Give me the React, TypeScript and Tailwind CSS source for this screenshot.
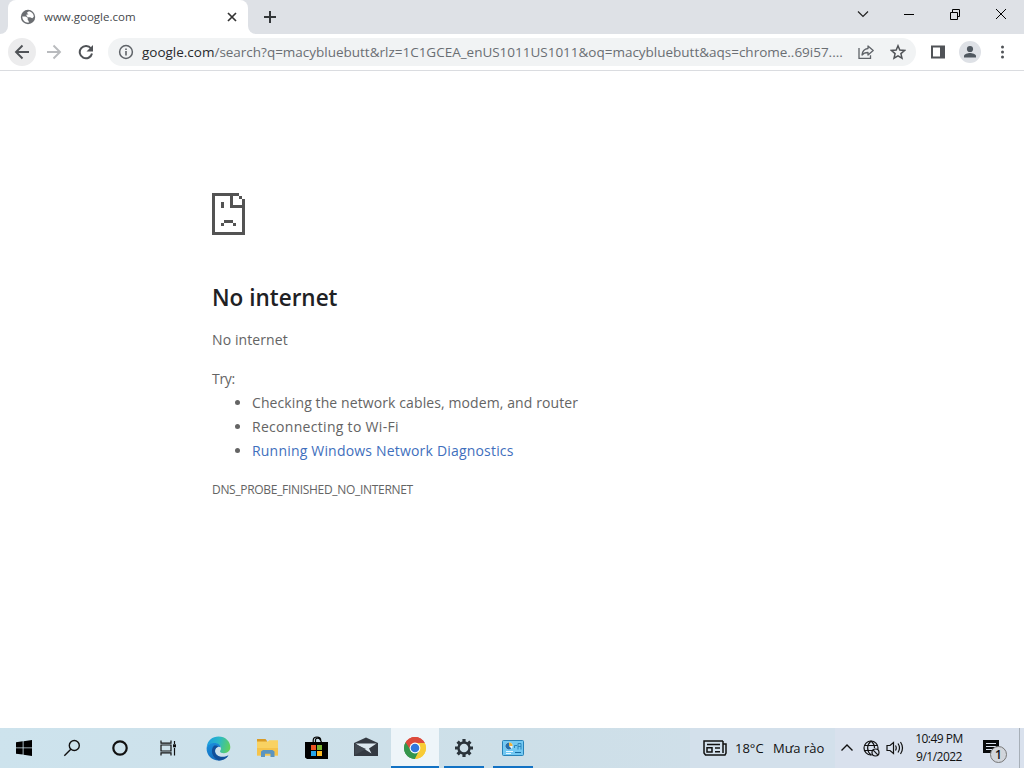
import type { ReactNode } from "react";

const suggestions = [
    { text: "Checking the network cables, modem, and router", className: "tracking-[0.1px]" },
    { text: "Reconnecting to Wi-Fi", className: "tracking-[0.3px]" },
    { text: "Running Windows Network Diagnostics", className: "tracking-[0.19px] text-[#3f6fbd]", link: true },
];

function TabStrip() {
    return (
        <div className="h-[34px] flex bg-[#dee1e6]">
            <div className="w-2 bg-white">
                <div className="h-full bg-[#dee1e6] rounded-br-lg" />
            </div>
            <div className="w-[240px] h-full bg-white rounded-t-lg flex items-center pl-3 pr-[10px]">
                <svg width="16" height="16" viewBox="0 0 16 16">
                    <circle cx="8" cy="8" r="7.2" fill="#6b6e72" />
                    <path
                        d="M2.300 7.500h3.200l2.200 1.200v2.200l1 1v1.800C5 13.800 2.300 11 2.300 7.500ZM6.800 3.800 9 2.300C12 2.800 13.700 5 13.800 7.800L12.300 9.200 10 8.200H7.800L6.500 7V5.500h2Z"
                        fill="#fff"
                    />
                </svg>
                <span className="ml-2 text-[11.5px] leading-4 text-[#45484c] flex-1">www.google.com</span>
                <svg width="12" height="12" viewBox="0 0 12 12">
                    <path d="m2 2 8 8m0-8-8 8" stroke="#333" strokeWidth="1.7" />
                </svg>
            </div>
            <div className="flex-1 bg-white">
                <div className="h-full bg-[#dee1e6] rounded-bl-lg flex items-center pl-[15px] pr-[17px]">
                    <svg width="14" height="14" viewBox="0 0 14 14">
                        <path d="M7 1v12M1 7h12" stroke="#333639" strokeWidth="2" />
                    </svg>
                    <div className="ml-auto flex items-center gap-[34px] pb-[6px]">
                        <svg width="12" height="12" viewBox="0 0 12 12" fill="none" stroke="#222" strokeWidth="1.2">
                            <path d="m1 3.500 5 5 5-5" />
                        </svg>
                        <svg width="12" height="12" viewBox="0 0 12 12" shapeRendering="crispEdges">
                            <path d="M1 6h10v1H1z" fill="#000" />
                        </svg>
                        <svg width="12" height="12" viewBox="0 0 12 12" fill="none" stroke="#000">
                            <path d="M1.500 4.500h7v7h-7zM3.500 4.500v-3h7v7h-2" />
                        </svg>
                        <svg width="12" height="12" viewBox="0 0 12 12" fill="none" stroke="#000">
                            <path d="m1 1 10 10M11 1 1 11" />
                        </svg>
                    </div>
                </div>
            </div>
        </div>
    );
}

function Toolbar() {
    return (
        <div className="h-[37px] flex items-center pl-2 bg-white border-b border-[#dadce0]">
            <div className="size-7 rounded-full bg-[#ececed] flex items-center justify-center">
                <svg width="16" height="16" viewBox="0 0 16 16" fill="none" stroke="#505357" strokeWidth="1.9">
                    <path d="M15 8H2.500M8.500 1.500 2 8l6.500 6.500" />
                </svg>
            </div>
            <svg className="ml-[10px]" width="16" height="16" viewBox="0 0 16 16" fill="none" stroke="#b9bbbe" strokeWidth="1.900">
                <path d="M1 8h12.500M7.500 1.500 14 8l-6.500 6.500" />
            </svg>
            <svg className="ml-4" width="16" height="16" viewBox="0 0 16 16" fill="none" stroke="#505357" strokeWidth="2">
                <path d="M13 4.500A6.200 6.200 0 1 0 14 9.500" />
                <path d="M15 1v6.500H8.500Z" fill="#505357" stroke="none" />
            </svg>
            <div className="ml-[14px] w-[808px] h-7 rounded-full bg-[#f1f3f4] flex items-center pl-[10px] pr-[10px]">
                <svg width="16" height="16" viewBox="0 0 16 16" fill="none" stroke="#5f6368" strokeWidth="1.500">
                    <circle cx="8" cy="8" r="6.400" />
                    <path d="M8 7v4.500M8 4.400v1.600" strokeWidth="1.600" />
                </svg>
                <span className="ml-2 w-[703px] text-[13.5px] leading-5 tracking-[-0.01px] whitespace-nowrap text-[#6a6e73]">
                    <span className="text-[#27292c]">google.com</span>
                    /search?q=macybluebutt&amp;rlz=1C1GCEA_enUS1011US1011&amp;oq=macybluebutt&amp;aqs=chrome..69i57....
                </span>
                <svg className="ml-[13px] shrink-0" width="16" height="16" viewBox="0 0 16 16" fill="none" stroke="#5f6368" strokeWidth="1.300">
                    <path d="M1 4v10.300h11.500v-3" />
                    <path d="M10 2 15.200 6.500 10 11V8.500C7.500 8.500 5.500 9 4 11 4.300 7.500 6 5 10 4.500Z" strokeLinejoin="round" />
                </svg>
                <svg className="ml-4 shrink-0" width="16" height="16" viewBox="0 0 16 16" fill="none" stroke="#505357" strokeWidth="1.500">
                    <path d="m8 1.800 1.800 4.300 4.700.4-3.600 3.100 1.100 4.600L8 11.800l-4 2.400 1.100-4.600L1.500 6.500l4.700-.4Z" />
                </svg>
            </div>
            <svg className="ml-[14px]" width="16" height="16" viewBox="0 0 16 16">
                <path d="M1 1.500h14v13H1ZM3 3.500v9h7v-9Z" fill="#505357" fillRule="evenodd" />
            </svg>
            <svg className="ml-[13px]" width="22" height="22" viewBox="0 0 22 22">
                <circle cx="11" cy="11" r="11" fill="#dee1e6" />
                <circle cx="11" cy="8" r="3.100" fill="#505860" />
                <path d="M5 16.500V15c0-2 4-3 6-3s6 1 6 3v1.500Z" fill="#505860" />
            </svg>
            <svg className="ml-[19px]" width="5" height="16" viewBox="0 0 5 16" fill="#505357">
                <circle cx="2.500" cy="3" r="1.500" />
                <circle cx="2.500" cy="8" r="1.500" />
                <circle cx="2.500" cy="13" r="1.500" />
            </svg>
        </div>
    );
}

function SadPage() {
    return (
        <svg width="33" height="42" viewBox="0 0 11 14" fill="#535353" shapeRendering="crispEdges">
            <path d="M0 0h9v1H1v12h9V5H6V1h1v3h3V2h1v12H0Z" />
            <path d="M9 1h1v1H9zM3 3h1v2H3zM4 9h3v1H4zM3 10h1v1H3zM7 10h1v1H7z" />
        </svg>
    );
}

function ErrorPage() {
    return (
        <main className="flex-1 pl-[212px] pt-[122px] bg-white text-[#646464]">
            <SadPage />
            <h1 className="mt-[47px] text-[22.5px] leading-8 font-semibold text-[#202124]">No internet</h1>
            <p className="mt-[14px] text-[14px] leading-6 tracking-[0.1px]">No internet</p>
            <p className="mt-[15px] text-[14px] leading-6 tracking-[-0.3px]">Try:</p>
            <ul className="list-disc pl-10 text-[14px] leading-6">
                {suggestions.map((s) => (
                    <li key={s.text}>
                        {s.link ? (
                            <a href="#" className={s.className}>
                                {s.text}
                            </a>
                        ) : (
                            <span className={s.className}>{s.text}</span>
                        )}
                    </li>
                ))}
            </ul>
            <p className="mt-4 text-[12px] leading-[22px] tracking-[-0.31px]">DNS_PROBE_FINISHED_NO_INTERNET</p>
        </main>
    );
}

function TaskButton({ children, open, active }: { children: ReactNode; open?: boolean; active?: boolean }) {
    return (
        <div className={`w-[49px] h-full flex flex-col items-center ${active ? "pl-px bg-[#eef5f9] bg-clip-content" : ""}`}>
            <div className="flex-1 flex items-center pt-[2px]">{children}</div>
            <div className={`h-[2px] ${active ? "w-full" : "w-10"} ${open ? "bg-[#1272c4]" : ""}`} />
        </div>
    );
}

function SystemButtons() {
    return (
        <>
            <div className="w-12 flex justify-center">
                <svg width="16" height="16" viewBox="0 0 16 16" fill="#000">
                    <path d="M0 2.200 6.700 1.300v6.200H0ZM7.500 1.200 16 0v7.500H7.500ZM0 8.300h6.700v6.300L0 13.700ZM7.500 8.300H16V16l-8.500-1.300Z" />
                </svg>
            </div>
            <div className="w-12 flex justify-center">
                <svg width="18" height="18" viewBox="0 0 18 18" fill="none" stroke="#111" strokeWidth="1.400">
                    <circle cx="11.300" cy="6.500" r="5" />
                    <path d="m7.800 10.200-6.500 6.500" />
                </svg>
            </div>
            <div className="w-12 flex justify-center">
                <svg width="18" height="18" viewBox="0 0 18 18" fill="none" stroke="#111" strokeWidth="2.200">
                    <circle cx="9" cy="9" r="6.700" />
                </svg>
            </div>
            <div className="w-12 flex justify-center">
                <svg width="17" height="16" viewBox="0 0 17 16" fill="none" stroke="#111" strokeWidth="1.200">
                    <path d="M1 .5v2.700h10V.5M1 5h10v6H1zM1 15.500v-2.700h10v2.700M14.500 1v3M14.500 8v7.500" />
                    <path d="M13 4.300h3v3h-3z" fill="#111" stroke="none" />
                </svg>
            </div>
        </>
    );
}

function Apps() {
    return (
        <>
            <TaskButton>
                <svg width="25" height="25" viewBox="0 0 25 25">
                    <defs>
                        <linearGradient id="edgeTop" x1="0" x2="1" y1="0.300" y2="0.500">
                            <stop offset="0" stopColor="#1b9de2" />
                            <stop offset="0.500" stopColor="#2cb9c5" />
                            <stop offset="1" stopColor="#5fd05e" />
                        </linearGradient>
                        <linearGradient id="edgeSide" x1="0" x2="0.600" y1="0" y2="1">
                            <stop offset="0" stopColor="#1a91de" />
                            <stop offset="1" stopColor="#1468b8" />
                        </linearGradient>
                    </defs>
                    <path d="M.7 11C1.500 4.500 6.500.5 12.500.5c7 0 11.800 5 11.800 10.500 0 4-3 6.200-6.300 6.200-2.500 0-4-.9-4-2 0-.8 1-1.100 1-3 0-2.200-2.200-4.700-6-4.700C4.500 7.500 1.500 9.500.7 11Z" fill="url(#edgeTop)" />
                    <path d="M.6 12C1 9 4.500 7 8.500 7c3.500 0 6 2 6.300 4.500C13 10 9 10.700 9 15c0 4 4 6.700 8.500 6.200 2.300-.3 4-1.300 5-2-2 3.300-5.800 5.300-10 5.300C6 24.500.3 19.500.6 12Z" fill="url(#edgeSide)" />
                    <path d="M8 9.700c-3.800 3.800-2.500 12 4.800 14.700 4 .1 7.700-2 9.700-5.200-5.500 3.300-13.500 1.300-13.500-4.200 0-2.600 2-4 3.500-4.300C11.200 9.700 9.500 9 8 9.700Z" fill="#12509a" />
                </svg>
            </TaskButton>
            <TaskButton>
                <svg width="23" height="20" viewBox="0 0 23 20">
                    <path d="M1 1h8.500l1.500 2v13H1Z" fill="#d99b25" />
                    <path d="M1 3.500h11l1.300-1.300H22v15.300H1Z" fill="#f9d262" />
                    <path d="M1 10h21v7.500H1Z" fill="#f5c34b" />
                    <path d="M5 19v-5.500L7 12h9.500l2 1.500V19h-4v-3.200H9V19Z" fill="#5b94bf" />
                </svg>
            </TaskButton>
            <TaskButton>
                <svg width="24" height="24" viewBox="0 0 24 24">
                    <path d="M8.200 7V4.500C8.200 2 9.700 1 12 1s3.800 1 3.800 3.500V7M10.500 7V3.700C11 2 14 1.500 15 3.500L17 7" fill="none" stroke="#000" strokeWidth="1.200" />
                    <path d="M0 6h23v17H2L0 21.500Z" fill="#000" />
                    <path d="M6 9h5v5H6z" fill="#ee5524" />
                    <path d="M12 9h5v5h-5z" fill="#7ab532" />
                    <path d="M6 15h5v5H6z" fill="#25a4e8" />
                    <path d="M12 15h5v5h-5z" fill="#fcb91f" />
                </svg>
            </TaskButton>
            <TaskButton>
                <svg className="mb-[3px]" width="24" height="20" viewBox="0 0 24 20">
                    <path d="M0 6 12 .5 24 6v13H0Z" fill="#343a42" />
                    <path d="M1.500 6.500 22.500 6.500 15 11.500 17.500 16.500Z" fill="#dce8ef" />
                    <path d="M1 7 12 12l-11 6Z" fill="#414850" />
                </svg>
            </TaskButton>
            <TaskButton open active>
                <svg width="22" height="22" viewBox="0 0 22 22">
                    <path d="M11 11 1.500 5.500A11 11 0 0 1 20.500 5.500Z" fill="#dc4a3b" />
                    <path d="M11 11 20.500 5.500A11 11 0 0 1 11 22Z" fill="#f8cb35" />
                    <path d="M11 11V22A11 11 0 0 1 1.500 5.500Z" fill="#35964c" />
                    <path d="M11 6h9.800l-.3-.5A11 11 0 0 0 1.500 5.500L6.700 13.500Z" fill="#dc4a3b" />
                    <path d="m6.700 13.500 4.300 2.500 4.300-2.500L11 22A11 11 0 0 1 1.500 5.500Z" fill="#35964c" />
                    <path d="M11 6h9.800A11 11 0 0 1 11 22l4.300-8.500Z" fill="#f8cb35" />
                    <circle cx="11" cy="11" r="5.400" fill="#fff" />
                    <circle cx="11" cy="11" r="4.300" fill="#3277dc" />
                </svg>
            </TaskButton>
            <TaskButton open>
                <svg width="18" height="18" viewBox="0 0 18 18" fill="none" stroke="#2b343b">
                    <circle cx="9" cy="9" r="5.500" strokeWidth="2.400" />
                    <g strokeWidth="3.200">
                        <path d="M9 0v3.300M9 14.700V18M0 9h3.300M14.700 9H18" />
                        <path d="m2.600 2.600 2.400 2.400M13 13l2.400 2.400M2.600 15.400 5 13M13 5l2.400-2.400" />
                    </g>
                </svg>
            </TaskButton>
            <TaskButton open>
                <svg width="22" height="16" viewBox="0 0 22 16">
                    <rect x="0.500" y="0.500" width="21" height="15" rx="1" fill="#72c8f2" stroke="#2782b8" />
                    <circle cx="7" cy="6" r="3.600" fill="#e7f6ff" />
                    <path d="M7 6V2.400a3.600 3.600 0 0 1 3.600 3.600Z" fill="#efb23e" />
                    <path d="M7 2.400A3.600 3.600 0 1 0 9.500 8.600L7 6Z" fill="#276fa9" />
                    <path d="M12.500 8V5.500H15M16 9.500v-6h3v6M16 6.500h3" fill="none" stroke="#2c86bd" />
                    <path d="M4 11.500h7M4 13.500h5" stroke="#e7f6ff" />
                    <path d="M13 12.500h6" stroke="#176ca5" />
                </svg>
            </TaskButton>
        </>
    );
}

function Tray() {
    return (
        <div className="ml-auto h-full flex items-center bg-[#d9e1ed] text-[#111]">
            <div className="w-[145px] h-full flex items-center pl-[13px] bg-[#d3e0eb]">
                <svg width="24" height="16" viewBox="0 0 24 16" fill="none" stroke="#111" strokeWidth="1.500">
                    <path d="M20 1H1v12l1.500 2H22l1-2V4h-3v9M20 1v12" />
                    <path d="M4 4.500h13M4 7.700h5V12H4zM12 8h5M12 11.700h5" />
                </svg>
                <span className="ml-2 w-[38px] text-[13px] leading-5 whitespace-nowrap">18°C</span>
                <span className="text-[13px] leading-5 whitespace-nowrap">Mưa rào</span>
            </div>
            <svg className="ml-[5px]" width="14" height="14" viewBox="0 0 14 14" fill="none" stroke="#111" strokeWidth="1.400">
                <path d="m1.500 9.500 5.500-5.500 5.500 5.500" />
            </svg>
            <svg className="ml-[9px]" width="17" height="17" viewBox="0 0 17 17" fill="none" stroke="#111" strokeWidth="1.200">
                <circle cx="8" cy="8" r="7" />
                <path d="M8 1C3.500 5 3.500 11 8 15M8 1c2.500 2 3.500 4.500 3.500 7M1.500 5.500h13M1.500 10.500H9" />
                <circle cx="12.500" cy="12.500" r="3.500" fill="#d9e1ed" />
                <path d="m10.200 10.200 4.600 4.600" />
            </svg>
            <svg className="ml-[6px]" width="18" height="16" viewBox="0 0 18 16" fill="none" stroke="#111" strokeWidth="1.200">
                <path d="M1 5.500h3l3.500-3v11L4 10.500H1ZM9.500 5.500q1.500 2.500 0 5M12 3.500q3 4.500 0 9M14.500 2q4 6 0 12" />
            </svg>
            <div className="ml-[6px] w-[58px] text-center text-[12px] leading-[18px] whitespace-nowrap tracking-[-0.5px]">
                <div>10:49 PM</div>
                <div>9/1/2022</div>
            </div>
            <div className="relative ml-[14px] w-[27px] h-7">
                <svg className="mt-[6px] ml-px" width="18" height="18" viewBox="0 0 18 18">
                    <path d="M0 0h16v13h-4v4l-4-4H0Z" fill="#080a0c" />
                    <path d="M3 3.500h10M3 6.500h10M3 9.500h7" stroke="#d9e1ed" />
                </svg>
                <span className="absolute left-[8px] top-[12px] size-[17px] rounded-full border border-[#777] bg-[#d1d5db] text-[12px] leading-[15px] font-semibold text-center">
                    1
                </span>
            </div>
            <div className="ml-[10px] w-[5px] h-full border-l border-[#a7afb8]" />
        </div>
    );
}

export default function App() {
    return (
        <div className="w-[1024px] h-[768px] flex flex-col overflow-hidden font-['Open_Sans','Noto_Sans',sans-serif]">
            <TabStrip />
            <Toolbar />
            <ErrorPage />
            <footer className="h-10 flex items-center bg-gradient-to-r from-[#cde3ed] via-[#cddfe8] to-[#d3e0eb]">
                <SystemButtons />
                <div className="ml-[2px] h-full flex">
                    <Apps />
                </div>
                <Tray />
            </footer>
        </div>
    );
}
